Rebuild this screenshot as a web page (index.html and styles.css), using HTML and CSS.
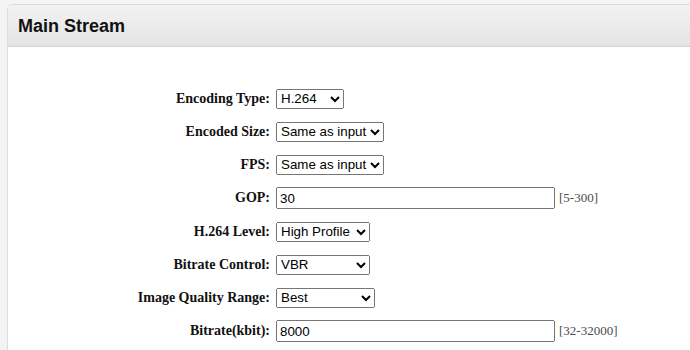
FILE: index.html
```html
<!DOCTYPE html>
<html lang="en">
<head>
  <meta charset="UTF-8">
  <title>Main Stream</title>
  <link rel="stylesheet" href="styles.css">
</head>
<body>
  <div class="panel">
    <div class="panel-head">
      <h3>Main Stream</h3>
    </div>
    <div class="panel-body">
      <table class="form">
        <tr>
          <td class="label">Encoding Type:</td>
          <td>
            <select class="w-type">
              <option>H.264</option>
              <option>H.265</option>
            </select>
          </td>
        </tr>
        <tr>
          <td class="label">Encoded Size:</td>
          <td>
            <select>
              <option>Same as input</option>
              <option>1920x1080</option>
            </select>
          </td>
        </tr>
        <tr>
          <td class="label">FPS:</td>
          <td>
            <select>
              <option>Same as input</option>
              <option>30</option>
            </select>
          </td>
        </tr>
        <tr>
          <td class="label">GOP:</td>
          <td>
            <input type="text" class="num" value="30">
            <span class="hint">[5-300]</span>
          </td>
        </tr>
        <tr>
          <td class="label">H.264 Level:</td>
          <td>
            <select class="w-level">
              <option>High Profile</option>
              <option>Main Profile</option>
            </select>
          </td>
        </tr>
        <tr>
          <td class="label">Bitrate Control:</td>
          <td>
            <select class="w-level">
              <option>VBR</option>
              <option>CBR</option>
            </select>
          </td>
        </tr>
        <tr>
          <td class="label">Image Quality Range:</td>
          <td>
            <select class="w-quality">
              <option>Best</option>
              <option>Good</option>
            </select>
          </td>
        </tr>
        <tr>
          <td class="label">Bitrate(kbit):</td>
          <td>
            <input type="text" class="num" value="8000">
            <span class="hint">[32-32000]</span>
          </td>
        </tr>
      </table>
    </div>
  </div>
</body>
</html>
```

FILE: styles.css
```css
body {
  margin: 0;
  padding: 4px 0 0 7px;
  background: #f4f4f4;
  overflow: hidden;
  font-family: "Liberation Serif", serif;
}

.panel {
  width: 720px;
  height: 400px;
  background: #fff;
  border: 1px solid #dcdcdc;
  border-radius: 5px;
}

.panel-head {
  background: linear-gradient(#f2f2f2, #e4e4e4);
  border-bottom: 1px solid #d4d4d4;
  border-radius: 5px 5px 0 0;
  display: flex;
  align-items: center;
  padding: 2px 0 0 10px;
  box-sizing: border-box;
  height: 42px;
}

.panel-head h3 {
  margin: 0;
  font-family: "Liberation Sans", Arial, sans-serif;
  font-size: 18px;
  font-weight: bold;
  color: #111;
}

.panel-body {
  padding-top: 35px;
}

.form {
  border-collapse: collapse;
}

.form td {
  padding: 6px 0;
  height: 21px;
  vertical-align: middle;
}

.form .label {
  width: 262px;
  text-align: right;
  padding-right: 6px;
  font-weight: bold;
  font-size: 14px;
  color: #111;
}

select {
  font-family: "Liberation Sans", Arial, sans-serif;
  font-size: 13.33px;
  height: 20px;
  vertical-align: middle;
}

.w-type {
  width: 68px;
}

.w-level {
  width: 94px;
}

.w-quality {
  width: 99px;
}

.num {
  box-sizing: border-box;
  width: 279px;
  height: 22px;
  font-family: "Liberation Sans", Arial, sans-serif;
  font-size: 13.33px;
  vertical-align: middle;
}

.hint {
  font-size: 13px;
  color: #4a4a4a;
  vertical-align: middle;
}
```
